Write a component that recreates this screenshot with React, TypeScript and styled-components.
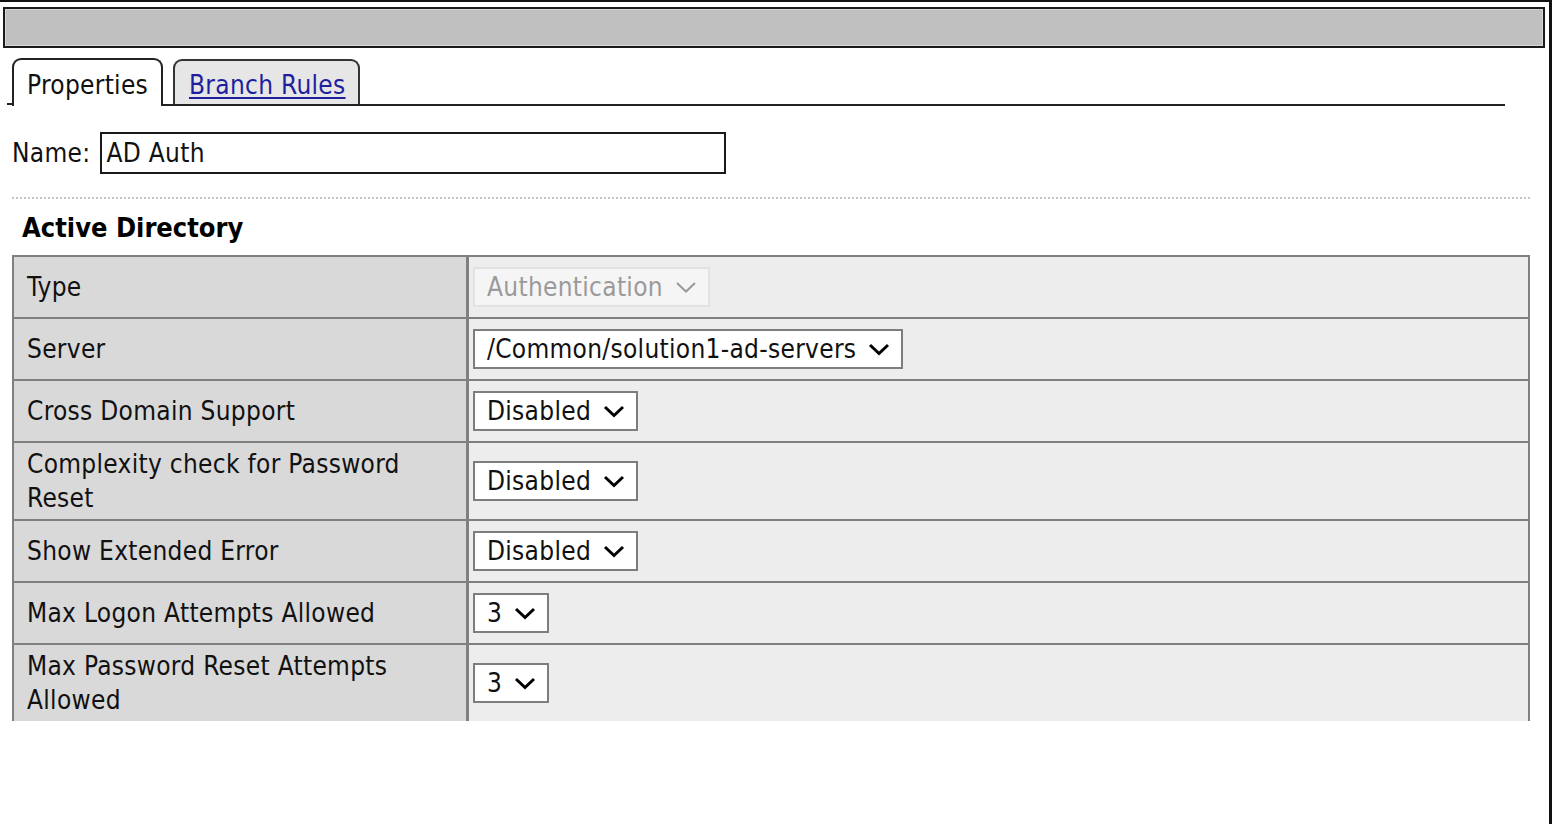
import React, { FC } from "react";
import styled, { createGlobalStyle } from "styled-components";

interface Field {
  label: string;
  value: string;
  disabled?: boolean;
}

const fields: Field[] = [
  { label: "Type", value: "Authentication", disabled: true },
  { label: "Server", value: "/Common/solution1-ad-servers" },
  { label: "Cross Domain Support", value: "Disabled" },
  { label: "Complexity check for Password Reset", value: "Disabled" },
  { label: "Show Extended Error", value: "Disabled" },
  { label: "Max Logon Attempts Allowed", value: "3" },
  { label: "Max Password Reset Attempts Allowed", value: "3" },
];

const GlobalStyle = createGlobalStyle`
  html, body {
    margin: 0;
    padding: 0;
    background: #fff;
    font-family: "DejaVu Sans Condensed", "Liberation Sans", Arial, sans-serif;
    color: #111;
  }
  * { box-sizing: border-box; }
`;

const Chevron: FC<{ muted?: boolean }> = ({ muted }) => (
  <svg width="22" height="13" viewBox="0 0 22 13">
    <polyline
      points="2,2 11,10.5 20,2"
      fill="none"
      stroke={muted ? "#9a9a9a" : "#000"}
      strokeWidth={muted ? 2 : 3}
    />
  </svg>
);

const App: FC = () => {
  return (
    <Frame>
      <GlobalStyle />
      <HeaderBar />
      <Viewport>
        <TabStrip>
          <TabFoot />
          <ActiveTab>Properties</ActiveTab>
          <TabRest>
            <InactiveTab>
              <TabLink href="#">Branch Rules</TabLink>
            </InactiveTab>
          </TabRest>
        </TabStrip>

        <NameRow>
          <NameLabel>Name:</NameLabel>
          <NameInput defaultValue="AD Auth" />
        </NameRow>

        <Divider />

        <SectionTitle>Active Directory</SectionTitle>

        <Table>
          {fields.map((f, idx) => (
            <Row key={idx}>
              <LabelCell>{f.label}</LabelCell>
              <ValueCell>
                <SelectBox disabled={f.disabled}>
                  <span>{f.value}</span>
                  <Chevron muted={f.disabled} />
                </SelectBox>
              </ValueCell>
            </Row>
          ))}
        </Table>
      </Viewport>
    </Frame>
  );
};

const Frame = styled.div`
  height: 824px;
  border-top: 2px solid #111;
  border-right: 3px solid #111;
  font-size: 26px;
  letter-spacing: 0.3px;
`;

const HeaderBar = styled.div`
  height: 41px;
  margin: 5px 4px 0 3px;
  background: #c0c0c0;
  border: 2px solid #1a1a1a;
  box-shadow: inset 0 0 0 1px #d6d6d6;
`;

const Viewport = styled.div`
  height: 673px;
  overflow: hidden;
  padding-top: 10px;
`;

const TabStrip = styled.div`
  display: flex;
  align-items: flex-end;
  height: 48px;
  margin: 0 44px 0 7px;
`;

const TabFoot = styled.div`
  width: 5px;
  border-bottom: 2px solid #222;
  margin-bottom: 1px;
`;

const ActiveTab = styled.div`
  display: flex;
  align-items: center;
  height: 48px;
  padding: 4px 0 0 13px;
  width: 151px;
  border: 2px solid #222;
  border-bottom: none;
  border-radius: 9px 9px 0 0;
  background: #fff;
  color: #111;
`;

const TabRest = styled.div`
  flex: 1;
  display: flex;
  align-items: flex-end;
  height: 48px;
  border-bottom: 2px solid #222;
  padding-left: 10px;
`;

const InactiveTab = styled.div`
  display: flex;
  align-items: center;
  height: 45px;
  width: 187px;
  padding: 4px 0 0 14px;
  background: #e6e6e6;
  border: 2px solid #333;
  border-bottom: none;
  border-radius: 9px 9px 0 0;
`;

const TabLink = styled.a`
  color: #1f1f9e;
  text-decoration: underline;
  text-underline-offset: 3px;
`;

const NameRow = styled.div`
  display: flex;
  align-items: center;
  gap: 10px;
  margin-top: 26px;
  padding-left: 12px;
`;

const NameLabel = styled.span`
  color: #111;
`;

const NameInput = styled.input`
  width: 626px;
  height: 42px;
  border: 2px solid #1a1a1a;
  padding: 0 4px;
  font: inherit;
  letter-spacing: inherit;
  color: #111;
  outline: none;
`;

const Divider = styled.div`
  margin: 23px 19px 0 12px;
  border-top: 2px dotted #c4c4c4;
`;

const SectionTitle = styled.h2`
  margin: 12px 0 0;
  padding-left: 22px;
  font-size: 27px;
  line-height: 34px;
  font-weight: 700;
  letter-spacing: 0;
  color: #000;
`;

const Table = styled.div`
  margin: 10px 19px 0 12px;
  border: 2px solid #808080;
  border-bottom: none;
`;

const Row = styled.div`
  display: grid;
  grid-template-columns: 455px 1fr;
  border-bottom: 2px solid #808080;
`;

const LabelCell = styled.div`
  display: flex;
  align-items: center;
  padding: 4px 40px 4px 13px;
  line-height: 34px;
  background: #d9d9d9;
  border-right: 3px solid #808080;
  color: #111;
`;

const ValueCell = styled.div`
  display: flex;
  align-items: center;
  padding: 10px 4px;
  background: #ededed;
`;

const SelectBox = styled.div<{ disabled?: boolean }>`
  display: inline-flex;
  align-items: center;
  gap: 12px;
  height: 40px;
  padding: 0 11px 0 12px;
  background: ${(p) => (p.disabled ? "#f5f5f5" : "#fff")};
  border: 2px solid ${(p) => (p.disabled ? "#e2e2e2" : "#7d7d7d")};
  color: ${(p) => (p.disabled ? "#9a9a9a" : "#111")};
  white-space: nowrap;
`;

export default App;
